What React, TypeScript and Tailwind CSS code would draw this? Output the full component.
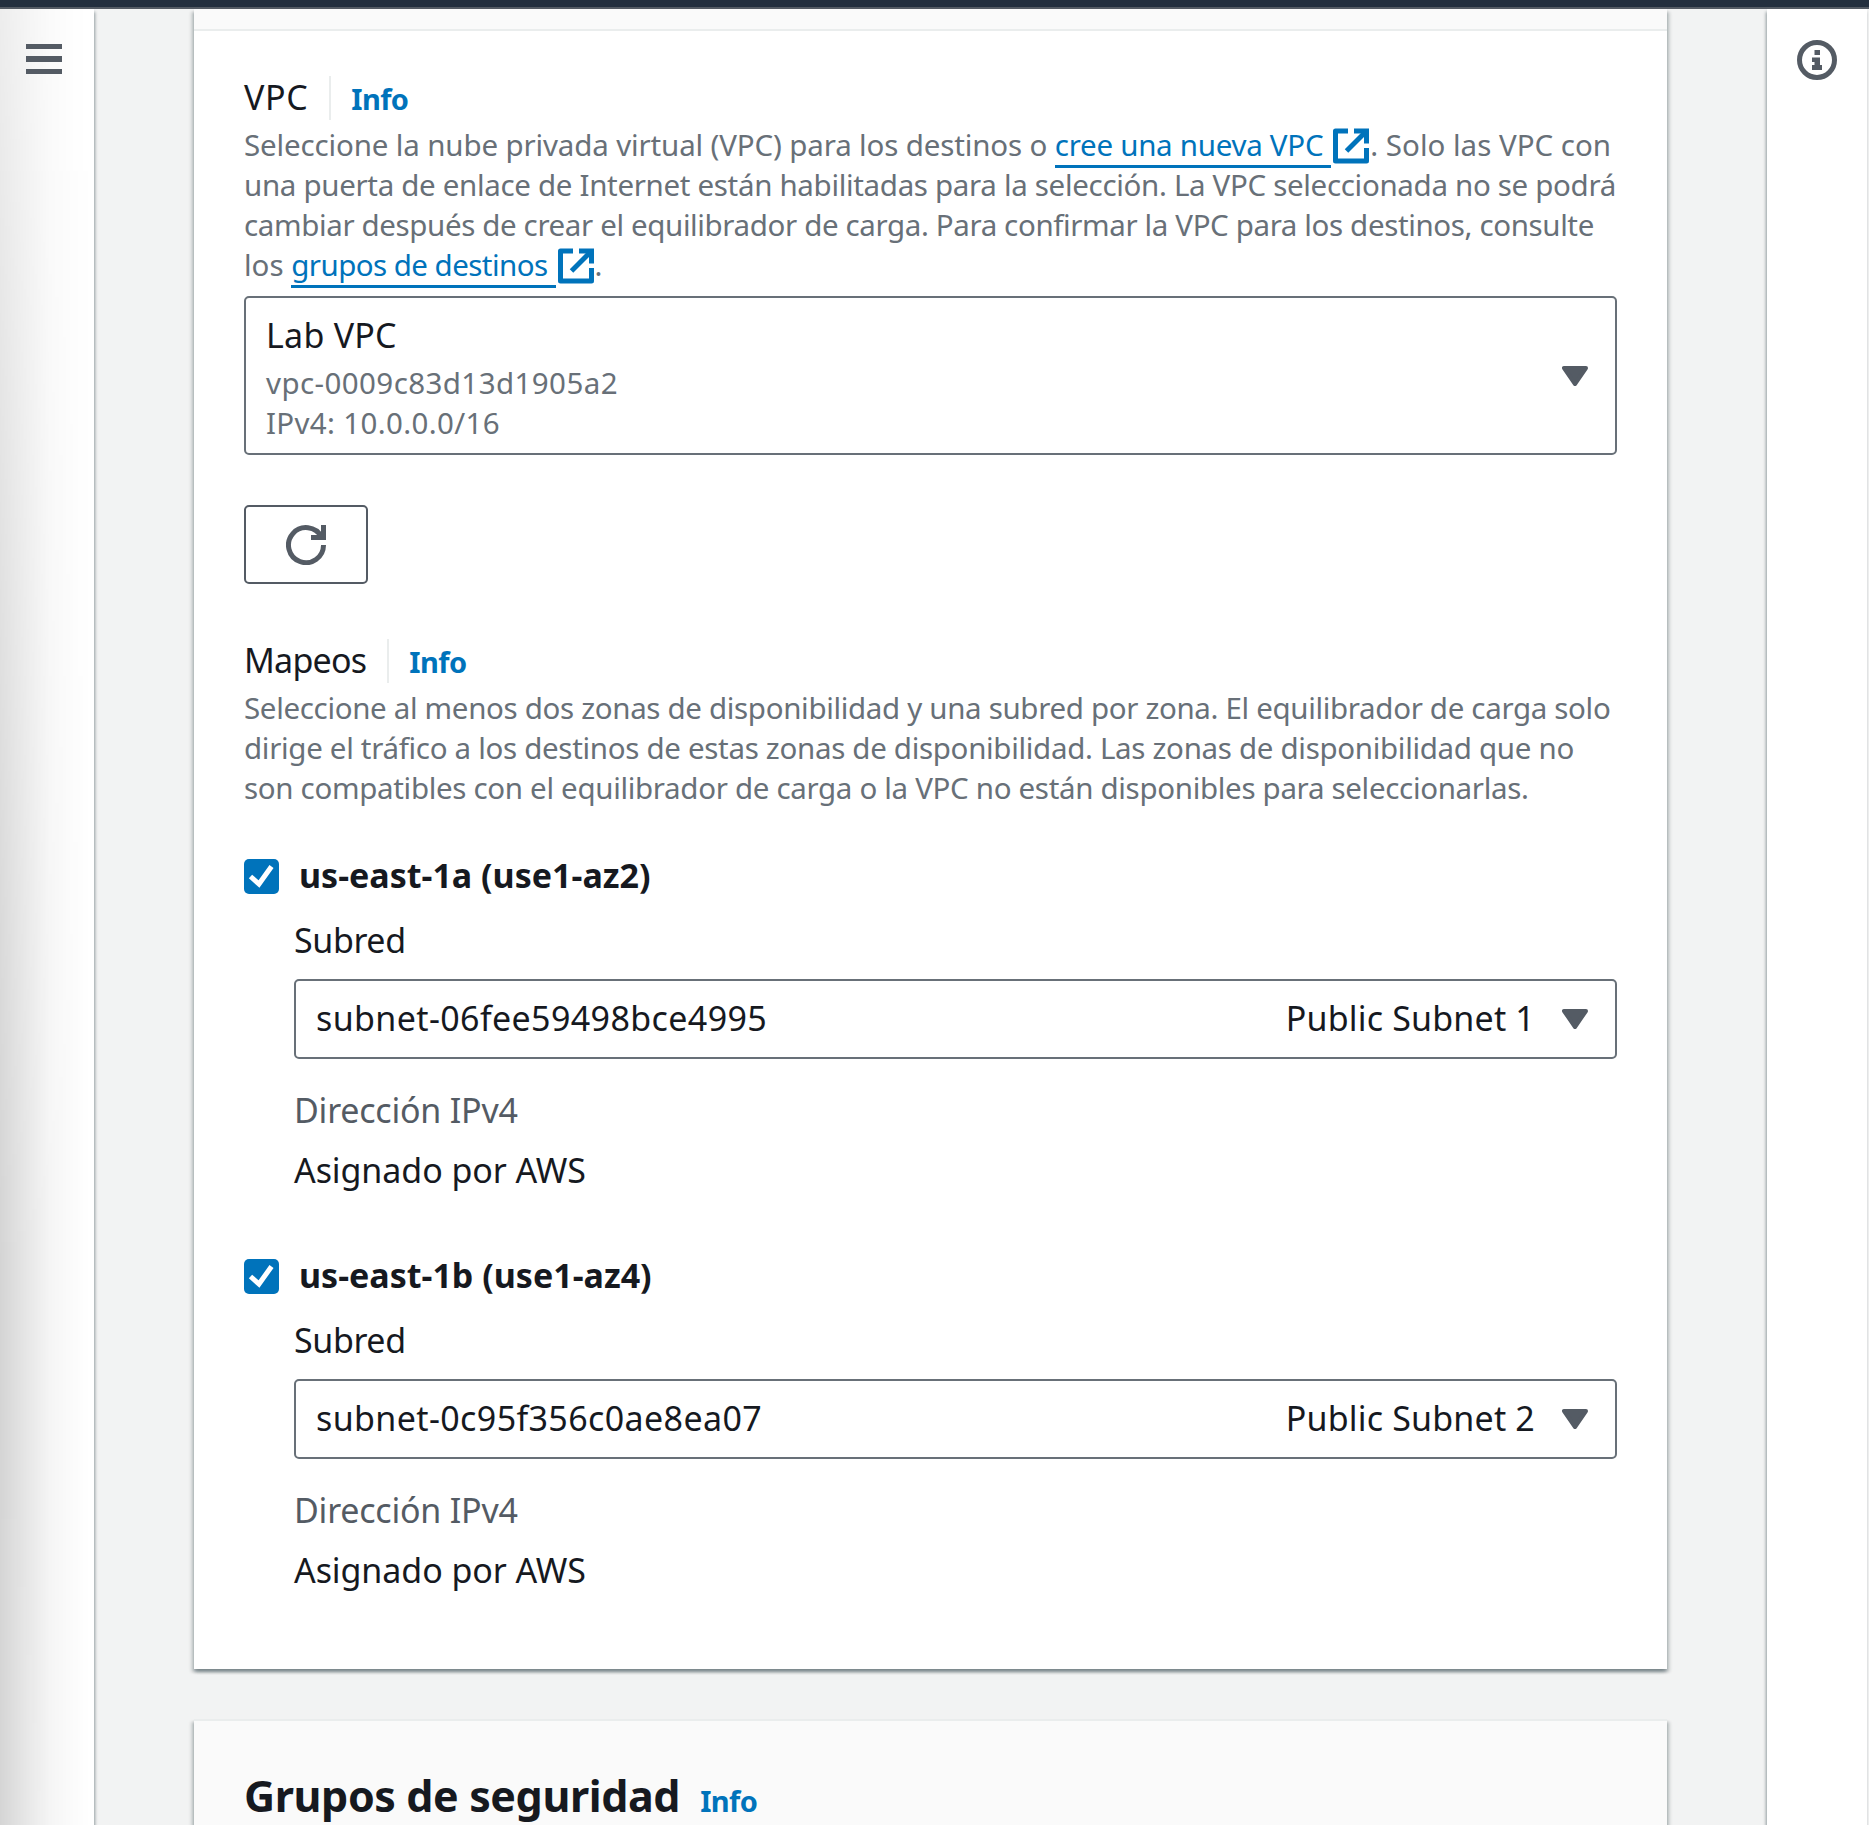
import React from "react";

function ExternalIcon() {
  return (
    <svg width="36" height="36" viewBox="0 0 36 36" fill="none" stroke="currentColor" strokeWidth="5" strokeLinejoin="round" className="mt-[3px] ml-[2px] shrink-0">
      <path d="M15 3H2.5V33H33.5V20" />
      <path d="M21 3H33.5V15.5" strokeLinejoin="miter" />
      <path d="M33 3.5L13.5 23" />
    </svg>
  );
}

function Caret() {
  return (
    <svg width="26" height="20" viewBox="0 0 26 20" className="shrink-0 text-[#545b64]">
      <path d="M2 2H24L13 18Z" fill="currentColor" stroke="currentColor" strokeWidth="4" strokeLinejoin="round" />
    </svg>
  );
}

function FieldHeader({ title, tracking }: { title: string; tracking: string }) {
  return (
    <div className="flex h-[50px] items-start">
      <span className={`text-[34px] leading-[51px] text-[#16191f] ${tracking}`}>{title}</span>
      <span className="mt-1 ml-[21px] h-11 w-0.5 bg-[#eaeded]" />
      <InfoLink className="ml-5 leading-[53px]" />
    </div>
  );
}

function InfoLink({ className }: { className: string }) {
  return <a className={`text-[29px] font-bold tracking-[-0.6px] text-[#0073bb] ${className}`}>Info</a>;
}

function HelpLink({ label, tracking }: { label: string; tracking: string }) {
  return (
    <a className="flex items-start text-[#0073bb]">
      <span className={`h-[43px] border-b-[3px] border-[#0073bb] pr-2 leading-10 ${tracking}`}>{label}</span>
      <ExternalIcon />
    </a>
  );
}

interface Zone {
  name: string;
  subnet: string;
  subnetName: string;
}

const zones: Zone[] = [
  { name: "us-east-1a (use1-az2)", subnet: "subnet-06fee59498bce4995", subnetName: "Public Subnet 1" },
  { name: "us-east-1b (use1-az4)", subnet: "subnet-0c95f356c0ae8ea07", subnetName: "Public Subnet 2" },
];

function ZoneBlock({ zone }: { zone: Zone }) {
  return (
    <div className="h-[400px] text-[34px] leading-[50px] text-[#16191f]">
      <div className="flex h-[50px]">
        <span className="mt-[9px] h-[35px] w-[35px] rounded-[5px] bg-[#0073bb]">
          <svg width="35" height="35" viewBox="0 0 35 35" fill="none" stroke="#fff" strokeWidth="5">
            <path d="M6.5 17.5L15 25L27.5 7.5" />
          </svg>
        </span>
        <span className="ml-5 font-bold">{zone.name}</span>
      </div>
      <div className="pl-[50px]">
        <div className="mt-[15px] h-[50px] tracking-[-0.4px]">Subred</div>
        <div className="mt-[14px] flex h-20 items-center rounded-[5px] border-2 border-[#687078] pr-[27px] pl-5">
          <span className="-mt-0.5 tracking-[0.38px]">{zone.subnet}</span>
          <span className="-mt-0.5 mr-[27px] ml-auto tracking-[0.18px]">{zone.subnetName}</span>
          <Caret />
        </div>
        <div className="mt-[26px] tracking-[-0.22px] text-[#545b64]">Dirección IPv4</div>
        <div className="mt-[10px] tracking-[-0.08px]">Asignado por AWS</div>
      </div>
    </div>
  );
}

export default function App() {
  return (
    <div className="flex h-[1825px] w-[1869px] flex-col overflow-hidden bg-[#f2f3f3] font-['Noto_Sans',sans-serif] whitespace-nowrap">
      <header className="z-10 h-[9px] shrink-0 border-b-2 border-[#545b64] bg-[#232f3e]" />

      <div className="flex min-h-0 flex-1">
        <nav className="w-[94px] shrink-0 bg-white shadow-[1px_3px_3px_0_rgba(0,28,36,0.4)]">
          <div className="h-full bg-[linear-gradient(to_right,rgba(0,0,0,0.17),rgba(0,0,0,0.1)_25px,rgba(0,0,0,0.04)_50px,rgba(0,0,0,0.01)_75px,transparent_90px)] [mask-image:linear-gradient(to_bottom,rgba(0,0,0,0.42),rgba(0,0,0,0.6)_20%,rgba(0,0,0,0.87)_50%,black_70%,rgba(0,0,0,0.97))]" />
          <div className="relative -mt-[1816px] flex flex-col gap-[7px] pt-[35px] pl-[26px]">
            <span className="h-[5px] w-9 bg-[#545b64]" />
            <span className="h-[6px] w-9 bg-[#545b64]" />
            <span className="h-[5px] w-9 bg-[#545b64]" />
          </div>
        </nav>

        <main className="flex min-w-0 flex-1 flex-col overflow-hidden px-[100px]">
          <section className="h-[1660px] w-[1473px] shrink-0 bg-white shadow-[0_3px_3px_0_rgba(0,28,36,0.3),3px_3px_3px_0_rgba(0,28,36,0.15),-3px_3px_3px_0_rgba(0,28,36,0.15)]">
            <div className="h-[22px] border-b-2 border-[#eaeded] bg-[#fafafa]" />
            <div className="px-[50px] pt-[41px]">
              <FieldHeader title="VPC" tracking="tracking-[0.6px]" />
              <div className="mt-[3px] text-[29.5px] leading-10 text-[#687078]">
                <div className="flex h-10">
                  <span className="tracking-[-0.14px] whitespace-pre">{"Seleccione la nube privada virtual (VPC) para los destinos o "}</span>
                  <HelpLink label="cree una nueva VPC" tracking="tracking-[-0.27px]" />
                  <span className="ml-px">. Solo las VPC con</span>
                </div>
                <div className="tracking-[-0.32px]">una puerta de enlace de Internet están habilitadas para la selección. La VPC seleccionada no se podrá</div>
                <div className="tracking-[-0.37px]">cambiar después de crear el equilibrador de carga. Para confirmar la VPC para los destinos, consulte</div>
                <div className="flex h-10">
                  <span className="whitespace-pre">{"los "}</span>
                  <HelpLink label="grupos de destinos" tracking="tracking-[-0.55px]" />
                  <span className="ml-px">.</span>
                </div>
              </div>

              <div className="mt-[11px] flex h-[159px] items-center rounded-[5px] border-2 border-[#687078] pr-[27px] pl-5">
                <div className="mt-px flex-1">
                  <div className="text-[34px] leading-[50px] tracking-[0.25px] text-[#16191f]">Lab VPC</div>
                  <div className="mt-[3px] text-[29.5px] leading-10 text-[#687078]">
                    <div className="tracking-[0.42px]">vpc-0009c83d13d1905a2</div>
                    <div className="tracking-[0.34px]">IPv4: 10.0.0.0/16</div>
                  </div>
                </div>
                <Caret />
              </div>

              <button className="mt-[50px] flex h-[79px] w-[124px] items-center justify-center rounded-[5px] border-2 border-[#545b64] bg-white text-[#545b64]">
                <svg width="40" height="40" viewBox="0 0 40 40" fill="none" stroke="currentColor" strokeWidth="5">
                  <path d="M37.5 20A17.5 17.5 0 1 1 35.5 12" />
                  <path d="M37.5 0V12.5H25" />
                </svg>
              </button>

              <div className="mt-[51px]">
                <FieldHeader title="Mapeos" tracking="tracking-[-0.75px]" />
                <div className="mt-[3px] text-[29.5px] leading-10 text-[#687078]">
                  <div className="tracking-[-0.33px]">Seleccione al menos dos zonas de disponibilidad y una subred por zona. El equilibrador de carga solo</div>
                  <div className="tracking-[-0.31px]">dirige el tráfico a los destinos de estas zonas de disponibilidad. Las zonas de disponibilidad que no</div>
                  <div className="tracking-[-0.32px]">son compatibles con el equilibrador de carga o la VPC no están disponibles para seleccionarlas.</div>
                </div>
              </div>

              <div className="mt-[42px]">
                {zones.map((z) => (
                  <ZoneBlock key={z.name} zone={z} />
                ))}
              </div>
            </div>
          </section>

          <section className="mt-[50px] h-[300px] w-[1473px] shrink-0 border-t-2 border-[#eaeded] bg-[#fafafa] px-[50px] pt-[45px] shadow-[0_3px_3px_0_rgba(0,28,36,0.3),3px_3px_3px_0_rgba(0,28,36,0.15),-3px_3px_3px_0_rgba(0,28,36,0.15)]">
            <div className="flex items-baseline leading-[60px]">
              <h2 className="text-[43px] font-bold tracking-[-0.4px] text-[#16191f]">Grupos de seguridad</h2>
              <InfoLink className="ml-5" />
            </div>
          </section>
        </main>

        <aside className="mr-0.5 w-[100px] shrink-0 bg-white pt-[31px] pl-[30px] text-[#545b64] shadow-[-1px_3px_3px_0_rgba(0,28,36,0.4)]">
          <svg width="40" height="40" viewBox="0 0 40 40" fill="currentColor">
            <circle cx="20" cy="20" r="17.5" fill="none" stroke="currentColor" strokeWidth="5" />
            <path d="M17.5 10H23V15H17.5Z" />
            <path d="M15 17.5H23V25H25V30H15V25H17.5V22H15Z" />
          </svg>
        </aside>
      </div>
    </div>
  );
}
